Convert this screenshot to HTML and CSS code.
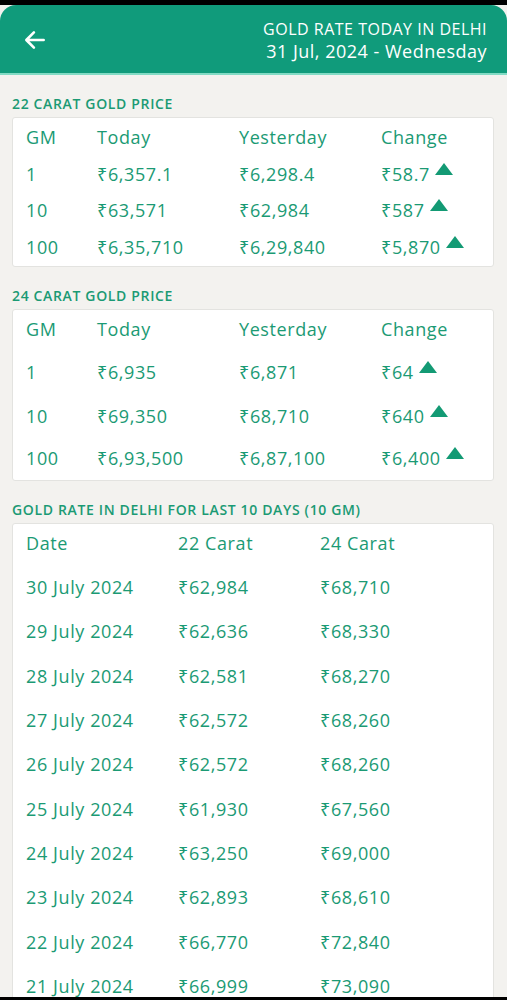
FILE: index.html
```html
<!DOCTYPE html>
<html>
<head>
<meta charset="utf-8">
<link rel="stylesheet" href="styles.css">
</head>
<body>
<div class="topbar"></div>
<header class="appbar">
  <svg class="back" width="24" height="24" viewBox="0 0 24 24"><path d="M20 12H5M11 5l-7 7 7 7" fill="none" stroke="#fff" stroke-width="2.4" stroke-linecap="round" stroke-linejoin="round"/></svg>
  <div class="titles">
    <div class="t1">GOLD RATE TODAY IN DELHI</div>
    <div class="t2">31 Jul, 2024 - Wednesday</div>
  </div>
</header>
<div class="rule"></div>

<main class="content">
  <h2 class="sec">22 CARAT GOLD PRICE</h2>
  <section class="card c1">
    <div class="row head g4"><span>GM</span><span>Today</span><span>Yesterday</span><span>Change</span></div>
    <div class="row g4"><span>1</span><span>₹6,357.1</span><span>₹6,298.4</span><span class="chg">₹58.7<svg class="up" viewBox="0 0 18 12"><path d="M9 0L18 12H0z"/></svg></span></div>
    <div class="row g4"><span>10</span><span>₹63,571</span><span>₹62,984</span><span class="chg">₹587<svg class="up" viewBox="0 0 18 12"><path d="M9 0L18 12H0z"/></svg></span></div>
    <div class="row g4"><span>100</span><span>₹6,35,710</span><span>₹6,29,840</span><span class="chg">₹5,870<svg class="up" viewBox="0 0 18 12"><path d="M9 0L18 12H0z"/></svg></span></div>
  </section>

  <h2 class="sec">24 CARAT GOLD PRICE</h2>
  <section class="card c2">
    <div class="row head g4"><span>GM</span><span>Today</span><span>Yesterday</span><span>Change</span></div>
    <div class="row g4"><span>1</span><span>₹6,935</span><span>₹6,871</span><span class="chg">₹64<svg class="up" viewBox="0 0 18 12"><path d="M9 0L18 12H0z"/></svg></span></div>
    <div class="row g4"><span>10</span><span>₹69,350</span><span>₹68,710</span><span class="chg">₹640<svg class="up" viewBox="0 0 18 12"><path d="M9 0L18 12H0z"/></svg></span></div>
    <div class="row g4 last"><span>100</span><span>₹6,93,500</span><span>₹6,87,100</span><span class="chg">₹6,400<svg class="up" viewBox="0 0 18 12"><path d="M9 0L18 12H0z"/></svg></span></div>
  </section>

  <h2 class="sec">GOLD RATE IN DELHI FOR LAST 10 DAYS (10 GM)</h2>
  <section class="card c3">
    <div class="row head g3"><span>Date</span><span>22 Carat</span><span>24 Carat</span></div>
    <div class="row g3"><span>30 July 2024</span><span>₹62,984</span><span>₹68,710</span></div>
    <div class="row g3"><span>29 July 2024</span><span>₹62,636</span><span>₹68,330</span></div>
    <div class="row g3"><span>28 July 2024</span><span>₹62,581</span><span>₹68,270</span></div>
    <div class="row g3"><span>27 July 2024</span><span>₹62,572</span><span>₹68,260</span></div>
    <div class="row g3"><span>26 July 2024</span><span>₹62,572</span><span>₹68,260</span></div>
    <div class="row g3"><span>25 July 2024</span><span>₹61,930</span><span>₹67,560</span></div>
    <div class="row g3"><span>24 July 2024</span><span>₹63,250</span><span>₹69,000</span></div>
    <div class="row g3"><span>23 July 2024</span><span>₹62,893</span><span>₹68,610</span></div>
    <div class="row g3"><span>22 July 2024</span><span>₹66,770</span><span>₹72,840</span></div>
    <div class="row g3"><span>21 July 2024</span><span>₹66,999</span><span>₹73,090</span></div>
  </section>
</main>
<div class="bottombar"></div>
</body>
</html>
```

FILE: styles.css
```css
html, body {
  margin: 0;
  padding: 0;
}
body {
  width: 507px;
  height: 1000px;
  overflow: hidden;
  background: #f3f2ef;
  font-family: "Open Sans", "Noto Sans", "DejaVu Sans", sans-serif;
  color: #1b9a74;
  position: relative;
}
.topbar {
  height: 5px;
  background: #000;
}
.appbar {
  box-sizing: border-box;
  height: 68px;
  background: #109b7b;
  border-radius: 16px 16px 0 0;
  display: flex;
  align-items: center;
  justify-content: space-between;
  padding: 2px 20px 0 22px;
  color: #fff;
}
.back {
  width: 26px;
  height: 26px;
  margin-top: -1px;
}
.titles {
  text-align: right;
  letter-spacing: 0.5px;
}
.t1 {
  font-size: 16px;
  font-weight: 400;
  line-height: 22px;
}
.t2 {
  font-size: 18px;
  font-weight: 500;
  line-height: 22px;
}
.rule {
  height: 2px;
  background: #82dbc4;
}
.content {
  padding: 0 13px 0 12px;
}
.sec {
  margin: 0;
  font-size: 14px;
  font-weight: 600;
  letter-spacing: 0.65px;
  line-height: 20px;
  padding: 19px 0 3px;
  color: #1b9a74;
  white-space: nowrap;
}
.card {
  background: #fff;
  border: 1px solid #e3e3e0;
  border-radius: 3px;
  padding: 0 0 0 13px;
}
.row {
  box-sizing: border-box;
  display: grid;
  align-items: center;
  font-size: 18px;
  letter-spacing: 0.6px;
  white-space: nowrap;
}
.g4 {
  grid-template-columns: 71px 142px 142px 1fr;
}
.g3 {
  grid-template-columns: 152px 142px 1fr;
}
.c1 .row {
  height: 36.5px;
}
.c1 {
  padding-top: 1px;
  padding-bottom: 1px;
}
.c2 .row {
  height: 44px;
}
.c2 .row.head {
  height: 40px;
  padding-bottom: 3px;
}
.c2 .row.last {
  height: 42px;
  padding-bottom: 2px;
}
.c3 .row {
  height: 44.3px;
}
.c3 .row.head {
  height: 41px;
  padding-bottom: 3px;
}
.chg {
  display: flex;
  align-items: flex-start;
}
.up {
  width: 18px;
  height: 12px;
  fill: #139a74;
  margin-left: 5px;
  margin-top: 1px;
}
.bottombar {
  position: absolute;
  left: 0;
  right: 0;
  bottom: 0;
  height: 3px;
  background: #000;
}
```
